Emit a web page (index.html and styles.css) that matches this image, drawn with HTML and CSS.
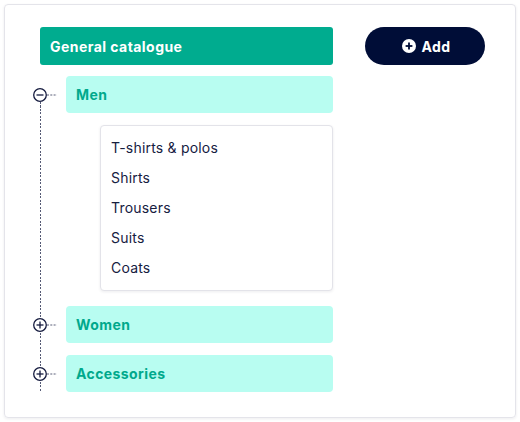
FILE: index.html
```html
<!DOCTYPE html>
<html>
<head>
<meta charset="utf-8">
<link rel="stylesheet" href="styles.css">
</head>
<body>
<div class="card">
  <div class="tree">
    <div class="root">General catalogue</div>
    <div class="branches">
      <div class="node">
        <svg class="toggle" width="33" height="16" viewBox="0 0 33 16">
          <line x1="14" y1="8" x2="24" y2="8" class="conn"/>
          <circle cx="7" cy="8" r="6.3" class="ring"/>
          <line x1="3.5" y1="8" x2="10.5" y2="8" class="sign"/>
        </svg>
        <div class="row">Men</div>
      </div>
      <ul class="submenu">
        <li>T-shirts &amp; polos</li>
        <li>Shirts</li>
        <li>Trousers</li>
        <li>Suits</li>
        <li>Coats</li>
      </ul>
      <div class="node node-gap">
        <svg class="toggle" width="33" height="16" viewBox="0 0 33 16">
          <line x1="14" y1="8" x2="24" y2="8" class="conn"/>
          <circle cx="7" cy="8" r="6.3" class="ring"/>
          <line x1="3.5" y1="8" x2="10.5" y2="8" class="sign"/>
          <line x1="7" y1="4.5" x2="7" y2="11.5" class="sign"/>
        </svg>
        <div class="row">Women</div>
      </div>
      <div class="node">
        <svg class="toggle" width="33" height="16" viewBox="0 0 33 16">
          <line x1="14" y1="8" x2="24" y2="8" class="conn"/>
          <circle cx="7" cy="8" r="6.3" class="ring"/>
          <line x1="3.5" y1="8" x2="10.5" y2="8" class="sign"/>
          <line x1="7" y1="4.5" x2="7" y2="11.5" class="sign"/>
        </svg>
        <div class="row">Accessories</div>
      </div>
    </div>
  </div>
  <button class="add">
    <svg width="14" height="14" viewBox="0 0 14 14">
      <circle cx="7" cy="7" r="7" fill="#ffffff"/>
      <line x1="3.6" y1="7" x2="10.4" y2="7" stroke="#000d37" stroke-width="1.8"/>
      <line x1="7" y1="3.6" x2="7" y2="10.4" stroke="#000d37" stroke-width="1.8"/>
    </svg>
    <span>Add</span>
  </button>
</div>
</body>
</html>
```

FILE: styles.css
```css
* { box-sizing: border-box; }
html, body { margin: 0; padding: 0; background: #ffffff; }
body {
  font-family: "Inter", "Open Sans", sans-serif;
  color: #141c3c;
}
.card {
  margin: 4px;
  width: 512px;
  height: 414px;
  border: 1px solid #e4e4ea;
  border-radius: 4px;
  box-shadow: 0 1px 3px rgba(20, 20, 50, 0.08);
  padding: 22px 0 0 35px;
  display: flex;
  align-items: flex-start;
}
.tree { width: 293px; }
.root {
  height: 38px;
  background: #00ac8f;
  border-radius: 3px;
  color: #ffffff;
  font-weight: 700;
  font-size: 14px;
  letter-spacing: 0.45px;
  display: flex;
  align-items: center;
  padding-left: 10px;
}
.branches {
  margin: 11px 0 0 -7px;
  width: 300px;
  background-image: repeating-linear-gradient(to bottom, #555a75 0 2px, transparent 2px 3.5px);
  background-repeat: no-repeat;
  background-size: 1px calc(100% - 26px);
  background-position: 6.5px 26px;
}
.node {
  display: flex;
  align-items: center;
}
.node + .node { margin-top: 12px; }
.node-gap { margin-top: 15px; }
.toggle { flex: none; display: block; }
.ring { fill: #ffffff; stroke: #141a3e; stroke-width: 1.3; }
.sign { stroke: #141a3e; stroke-width: 1.3; }
.conn { stroke: #5a5e78; stroke-width: 1; stroke-dasharray: 2 1.3; }
.row {
  flex: 1;
  height: 37px;
  background: #b8fdf1;
  border-radius: 4px;
  color: #00a98c;
  font-weight: 700;
  font-size: 14px;
  letter-spacing: 0.4px;
  display: flex;
  align-items: center;
  padding-left: 10px;
}
.submenu {
  list-style: none;
  margin: 12px 0 0 67px;
  padding: 7px 0 7px 10px;
  width: 233px;
  border: 1px solid #e3e3e9;
  border-radius: 4px;
  box-shadow: 0 1px 3px rgba(20, 20, 50, 0.08);
  background: #ffffff;
}
.submenu li {
  height: 30px;
  line-height: 30px;
  font-size: 14px;
  letter-spacing: 0.2px;
  color: #16203f;
}
.add {
  margin: 0 0 0 32px;
  width: 120px;
  height: 38px;
  border: none;
  border-radius: 19px;
  background: #000d37;
  color: #ffffff;
  font-family: inherit;
  font-size: 14px;
  font-weight: 700;
  letter-spacing: 0.4px;
  display: flex;
  align-items: center;
  justify-content: center;
  gap: 6px;
  padding: 0 0 0 2px;
}
.add svg { display: block; }
```
